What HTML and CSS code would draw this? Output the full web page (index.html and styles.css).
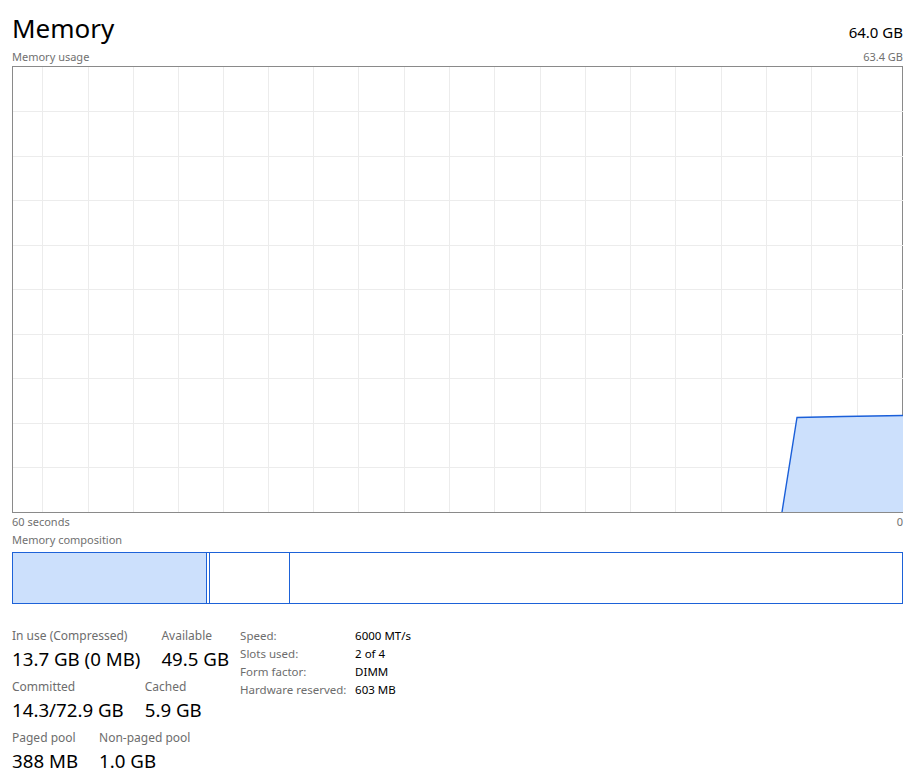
FILE: index.html
```html
<!DOCTYPE html>
<html lang="en">
<head>
  <meta charset="UTF-8">
  <title>Memory</title>
  <link rel="stylesheet" href="styles.css">
</head>
<body>

<div class="panel">
  <div class="header">
    <h1>Memory</h1>
    <span class="total">64.0 GB</span>
  </div>

  <div class="caption">
    <span>Memory usage</span>
    <span>63.4 GB</span>
  </div>

  <div class="chart">
    <svg viewBox="0 0 890 445" width="890" height="445">
      <g class="grid">
        <line x1="29" y1="0" x2="29" y2="445"/>
        <line x1="75" y1="0" x2="75" y2="445"/>
        <line x1="120" y1="0" x2="120" y2="445"/>
        <line x1="165" y1="0" x2="165" y2="445"/>
        <line x1="210" y1="0" x2="210" y2="445"/>
        <line x1="255" y1="0" x2="255" y2="445"/>
        <line x1="300" y1="0" x2="300" y2="445"/>
        <line x1="345" y1="0" x2="345" y2="445"/>
        <line x1="391" y1="0" x2="391" y2="445"/>
        <line x1="436" y1="0" x2="436" y2="445"/>
        <line x1="481" y1="0" x2="481" y2="445"/>
        <line x1="527" y1="0" x2="527" y2="445"/>
        <line x1="572" y1="0" x2="572" y2="445"/>
        <line x1="617" y1="0" x2="617" y2="445"/>
        <line x1="662" y1="0" x2="662" y2="445"/>
        <line x1="708" y1="0" x2="708" y2="445"/>
        <line x1="753" y1="0" x2="753" y2="445"/>
        <line x1="798" y1="0" x2="798" y2="445"/>
        <line x1="844" y1="0" x2="844" y2="445"/>
        <line x1="0" y1="44.5" x2="890" y2="44.5"/>
        <line x1="0" y1="89" x2="890" y2="89"/>
        <line x1="0" y1="133.5" x2="890" y2="133.5"/>
        <line x1="0" y1="178" x2="890" y2="178"/>
        <line x1="0" y1="222.5" x2="890" y2="222.5"/>
        <line x1="0" y1="267" x2="890" y2="267"/>
        <line x1="0" y1="311.5" x2="890" y2="311.5"/>
        <line x1="0" y1="356" x2="890" y2="356"/>
        <line x1="0" y1="400.5" x2="890" y2="400.5"/>
      </g>
      <path class="area" d="M769 445 L784 350.5 L830 349.5 L890 348.5 L890 445 Z"/>
      <polyline class="line" points="769,445 784,350.5 830,349.5 890,348.5"/>
    </svg>
  </div>

  <div class="caption">
    <span>60 seconds</span>
    <span>0</span>
  </div>
  <div class="caption comp-title">
    <span>Memory composition</span>
  </div>

  <div class="composition">
    <div class="seg in-use"></div>
    <div class="seg modified"></div>
    <div class="seg standby"></div>
    <div class="seg free"></div>
  </div>

  <div class="stats">
    <div class="stat-col">
      <div class="stat-row">
        <div class="stat">
          <div class="label">In use (Compressed)</div>
          <div class="value">13.7 GB (0 MB)</div>
        </div>
        <div class="stat">
          <div class="label">Available</div>
          <div class="value">49.5 GB</div>
        </div>
      </div>
      <div class="stat-row">
        <div class="stat">
          <div class="label">Committed</div>
          <div class="value">14.3/72.9 GB</div>
        </div>
        <div class="stat">
          <div class="label">Cached</div>
          <div class="value">5.9 GB</div>
        </div>
      </div>
      <div class="stat-row">
        <div class="stat">
          <div class="label">Paged pool</div>
          <div class="value">388 MB</div>
        </div>
        <div class="stat">
          <div class="label">Non-paged pool</div>
          <div class="value">1.0 GB</div>
        </div>
      </div>
    </div>

    <table class="details">
      <tr><td class="key">Speed:</td><td>6000 MT/s</td></tr>
      <tr><td class="key">Slots used:</td><td>2 of 4</td></tr>
      <tr><td class="key">Form factor:</td><td>DIMM</td></tr>
      <tr><td class="key">Hardware reserved:</td><td>603 MB</td></tr>
    </table>
  </div>
</div>

</body>
</html>
```

FILE: styles.css
```css
body {
  margin: 0;
  background-color: #fff;
  font-family: "Segoe UI", "Noto Sans", sans-serif;
  color: #000;
}

.panel {
  padding: 0 11px 0 12px;
}

.header {
  display: flex;
  justify-content: space-between;
  align-items: baseline;
  padding-top: 9px;
  height: 39px;
}

.header h1 {
  margin: 0;
  font-size: 26px;
  font-weight: normal;
  line-height: 38px;
}

.total {
  font-size: 15px;
}

.caption {
  display: flex;
  justify-content: space-between;
  font-size: 11px;
  line-height: 18px;
  color: #707070;
}

.chart {
  border: 1px solid #8a8a8a;
  height: 445px;
}

.chart svg {
  display: block;
}

.grid line {
  stroke: #ececec;
  stroke-width: 1;
  shape-rendering: crispEdges;
}

.area {
  fill: #cce0fc;
}

.line {
  fill: none;
  stroke: #1a5fd9;
  stroke-width: 1.4;
}

.comp-title {
  margin-bottom: 3px;
}

.composition {
  display: flex;
  height: 50px;
  border: 1px solid #1d62d8;
}

.seg {
  border-right: 1px solid #1d62d8;
}

.in-use {
  width: 193px;
  background-color: #cce0fc;
}

.modified {
  width: 2px;
}

.standby {
  width: 79px;
}

.free {
  flex: 1;
  border-right: none;
}

.stats {
  display: flex;
  gap: 11px;
  margin-top: 23px;
}

.stat-row {
  display: flex;
  gap: 21px;
  margin-bottom: 5px;
}

.label {
  font-size: 12px;
  line-height: 18px;
  color: #6d6d6d;
}

.value {
  font-size: 18.7px;
  line-height: 28px;
}

.details {
  border-collapse: collapse;
  font-size: 11.5px;
  align-self: flex-start;
}

.details td {
  padding: 0;
  height: 18px;
  line-height: 18px;
}

.details .key {
  color: #6d6d6d;
  width: 115px;
}
```
